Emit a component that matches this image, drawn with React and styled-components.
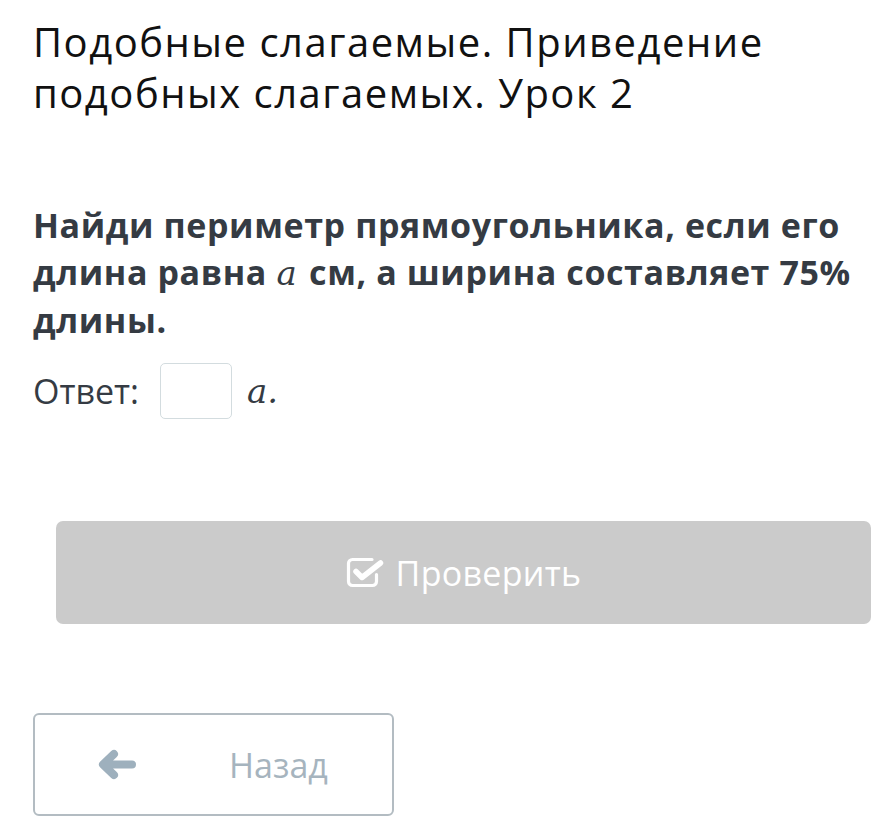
import React from 'react';
import styled, { createGlobalStyle } from 'styled-components';

const GlobalStyle = createGlobalStyle`
  body {
    margin: 0;
    background: #fff;
    font-family: "Open Sans", "Noto Sans", sans-serif;
  }
`;

const Page = styled.div`
  width: 883px;
  height: 825px;
  padding: 16px 0 0 33px;
  box-sizing: border-box;
  overflow: hidden;
`;

const Title = styled.h1`
  margin: 0;
  font-size: 40px;
  line-height: 51px;
  font-weight: 400;
  letter-spacing: 1.5px;
  color: #111;
`;

const Question = styled.p`
  width: 850px;
  margin: 84px 0 0;
  font-size: 34px;
  line-height: 47px;
  font-weight: 700;
  letter-spacing: 0.6px;
  color: #353b43;
`;

const MathVar = styled.span`
  display: inline-block;
  padding-right: ${(p) => (p.$tight ? '0' : '3px')};
  font-family: "DejaVu Serif", "Liberation Serif", serif;
  font-style: italic;
  font-weight: 400;
  letter-spacing: 0;
`;

const AnswerRow = styled.div`
  display: flex;
  align-items: center;
  gap: 15px;
  margin-top: 19px;
  font-size: 34px;
  color: #353b43;
`;

const AnswerBox = styled.div`
  width: 72px;
  height: 56px;
  margin-left: 6px;
  border: 1px solid #d3dcdf;
  border-radius: 5px;
  box-sizing: border-box;
`;

const CheckButton = styled.button`
  display: flex;
  align-items: center;
  justify-content: center;
  gap: 12px;
  width: 815px;
  height: 103px;
  margin: 102px 0 0 23px;
  padding: 0;
  border: none;
  border-radius: 7px;
  background: #cbcbcb;
  color: #fff;
  font-family: inherit;
  font-size: 34px;
  letter-spacing: 0.3px;
`;

const BackButton = styled.button`
  display: flex;
  align-items: center;
  width: 361px;
  height: 103px;
  margin-top: 89px;
  padding: 0 0 0 62px;
  border: 2px solid #b3bcc2;
  border-radius: 6px;
  background: #fff;
  color: #a6b4be;
  font-family: inherit;
  font-size: 34px;
  box-sizing: border-box;
`;

const BackText = styled.span`
  margin-left: 92px;
`;

const CheckSquareIcon = () => (
  <svg width="38" height="31" viewBox="0 0 38 31" fill="none">
    <path
      d="M26 2.5H6.5a4 4 0 0 0-4 4v18a4 4 0 0 0 4 4h20a4 4 0 0 0 4-4v-7"
      stroke="#fff"
      strokeWidth="3.2"
      strokeLinecap="round"
    />
    <path
      d="M10 14.5l6 6L34.5 6"
      stroke="#fff"
      strokeWidth="5.5"
      strokeLinecap="round"
      strokeLinejoin="round"
    />
  </svg>
);

const ArrowLeftIcon = () => (
  <svg width="40" height="31" viewBox="0 0 40 31" fill="none">
    <path
      d="M35 15.5H7M17 5L6 15.5 17 26"
      stroke="#9eb0bd"
      strokeWidth="8"
      strokeLinecap="round"
      strokeLinejoin="round"
    />
  </svg>
);

export default function App() {
  return (
    <Page>
      <GlobalStyle />
      <Title>
        Подобные слагаемые. Приведение
        <br />
        подобных слагаемых. Урок 2
      </Title>
      <Question>
        Найди периметр прямоугольника, если его длина равна <MathVar>a</MathVar> см, а ширина составляет 75% длины.
      </Question>
      <AnswerRow>
        Ответ:
        <AnswerBox />
        <MathVar $tight>a.</MathVar>
      </AnswerRow>
      <CheckButton>
        <CheckSquareIcon />
        Проверить
      </CheckButton>
      <BackButton>
        <ArrowLeftIcon />
        <BackText>Назад</BackText>
      </BackButton>
    </Page>
  );
}
